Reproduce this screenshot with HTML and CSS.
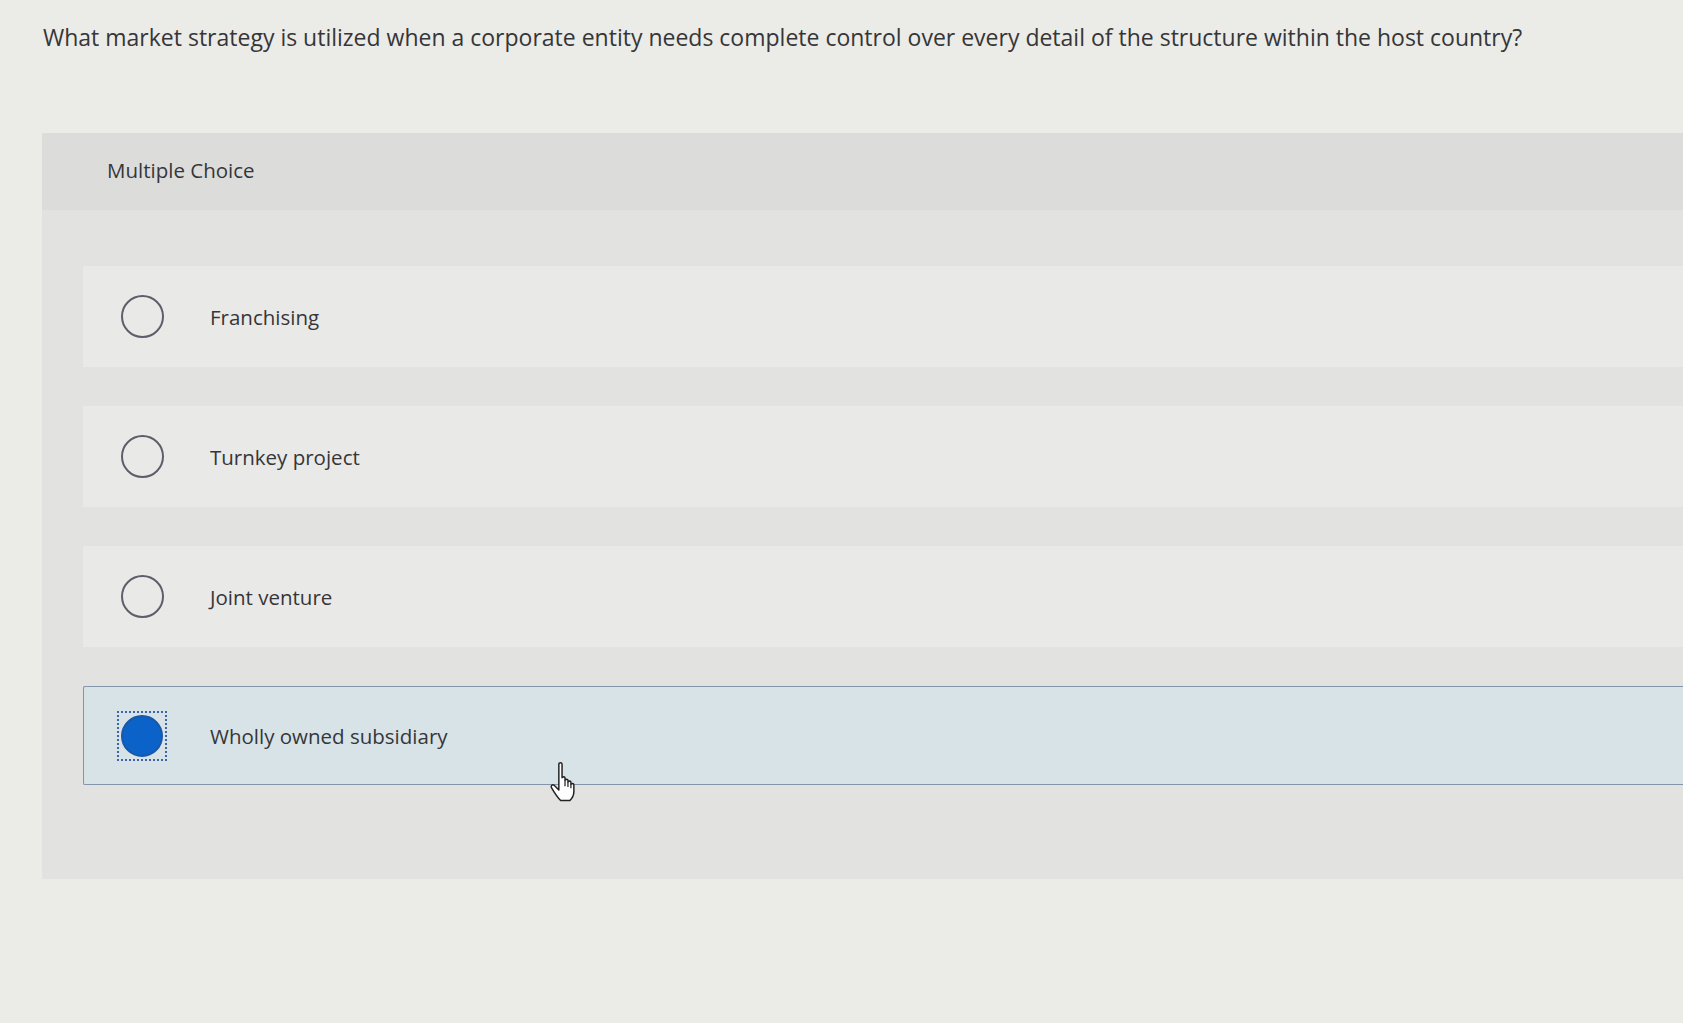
FILE: index.html
```html
<!DOCTYPE html>
<html lang="en">

<head>
  <meta charset="UTF-8">
  <meta name="viewport" content="width=device-width, initial-scale=1.0">
  <title>Multiple Choice</title>
  <link rel="stylesheet" href="styles.css">
</head>

<body>
  <p class="question">What market strategy is utilized when a corporate entity needs complete control over every detail of the structure within the host country?</p>

  <section class="panel">
    <div class="panel-head">Multiple Choice</div>
    <div class="choices">
      <label class="choice">
        <span class="radio"></span>
        <span class="choice-text">Franchising</span>
      </label>
      <label class="choice">
        <span class="radio"></span>
        <span class="choice-text">Turnkey project</span>
      </label>
      <label class="choice">
        <span class="radio"></span>
        <span class="choice-text">Joint venture</span>
      </label>
      <label class="choice selected">
        <span class="focus"><span class="radio"></span></span>
        <span class="choice-text">Wholly owned subsidiary</span>
        <svg class="cursor" width="32" height="42" viewBox="0 0 26 34">
          <path d="M8 2.5c0-1.4 2.6-1.4 2.6 0v11c0-1 2.4-1 2.4 0v2c0-1 2.4-1 2.4 0v1.5c0-1 2.4-1 2.4 0v2c0-1 2.4-1 2.4 0v6c0 3-1.6 5.5-3.2 7H9.5C7.5 30 4 25 2 21.5c-.8-1.4.8-3 2.2-1.8L8 23.5z" fill="#fff" stroke="#222" stroke-width="1.2" stroke-linejoin="round" />
          <path d="M13 15.5v5M15.4 17v4M17.8 19v3" stroke="#222" stroke-width="1" />
        </svg>
      </label>
    </div>
  </section>
</body>

</html>
```

FILE: styles.css
```css
body {
  margin: 0;
  background: #ebebe8;
  font-family: "Open Sans", "Liberation Sans", sans-serif;
  color: #363638;
}

.question {
  margin: 0;
  padding: 21px 0 0 43px;
  font-size: 23px;
  line-height: 32px;
  white-space: nowrap;
}

.panel {
  margin: 80px 0 0 42px;
  background: #e2e2e1;
  padding-bottom: 94px;
}

.panel-head {
  height: 77px;
  box-sizing: border-box;
  padding: 23px 0 0 65px;
  background: #dcdcdb;
  font-size: 20.5px;
  line-height: 28px;
}

.choices {
  display: flex;
  flex-direction: column;
  gap: 39px;
  padding: 56px 0 0 41px;
}

.choice {
  display: flex;
  align-items: center;
  height: 101px;
  box-sizing: border-box;
  background: #e9e9e8;
  font-size: 20.5px;
  position: relative;
}

.radio {
  width: 43px;
  height: 43px;
  box-sizing: border-box;
  border: 2px solid #5e5e6a;
  border-radius: 50%;
  margin-left: 38px;
  flex: none;
}

.choice-text {
  margin-left: 46px;
}

.choice.selected {
  height: 99px;
  background: #d8e3e8;
  border: 1px solid #8494aa;
  border-right: none;
  border-radius: 2px 0 0 2px;
}

.focus {
  width: 50px;
  height: 50px;
  box-sizing: border-box;
  margin-left: 33px;
  border: 2px dotted #3d63a8;
  display: flex;
  align-items: center;
  justify-content: center;
  flex: none;
}

.focus .radio {
  margin: 0;
  width: 42px;
  height: 42px;
  background: #0b62c8;
  border-color: #1a57a8;
}

.selected .choice-text {
  margin-left: 43px;
}

.cursor {
  position: absolute;
  left: 465px;
  top: 74px;
}
```
